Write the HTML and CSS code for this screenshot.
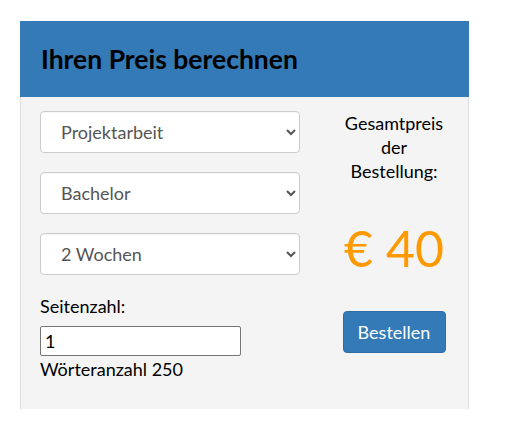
FILE: index.html
```html
<!DOCTYPE html>
<html lang="de">
<head>
<meta charset="utf-8">
<title>Ihren Preis berechnen</title>
<link rel="stylesheet" href="styles.css">
</head>
<body>
<div class="page">
  <section class="panel">
    <header class="panel-head">
      <h2 class="panel-title">Ihren Preis berechnen</h2>
    </header>
    <div class="panel-body">
      <div class="form-col">
        <select class="field">
          <option>Projektarbeit</option>
        </select>
        <select class="field">
          <option>Bachelor</option>
        </select>
        <select class="field">
          <option>2 Wochen</option>
        </select>
        <label class="pages-label" for="pages">Seitenzahl:</label>
        <input class="pages-input" id="pages" type="text" value="1">
        <div class="words">Wörteranzahl 250</div>
      </div>
      <div class="price-col">
        <div class="price-label">Gesamtpreis der Bestellung:</div>
        <div class="price">€ 40</div>
        <button class="order-btn" type="button">Bestellen</button>
      </div>
    </div>
  </section>
</div>
</body>
</html>
```
FILE: styles.css
```css
html, body {
  margin: 0;
  padding: 0;
  background: #fff;
}
body {
  font-family: Lato, "Open Sans", sans-serif;
  color: #000;
}
.page {
  padding: 21px 0 0 20px;
}
.panel {
  width: 449px;
  box-sizing: border-box;
  border: 1px solid #dcdcdc;
  border-bottom: none;
  background: #f4f4f4;
}
.panel-head {
  background: #337ab7;
  height: 76px;
  display: flex;
  align-items: center;
  margin: -1px -1px 0 -1px;
  padding: 0 20px 0 21px;
}
.panel-title {
  margin: 0;
  font-size: 26.5px;
  line-height: 32px;
  font-weight: 700;
  color: #000;
}
.panel-body {
  display: flex;
  padding: 14px 0 28px 19px;
}
.form-col {
  width: 260px;
  display: flex;
  flex-direction: column;
  align-items: flex-start;
}
.field {
  width: 260px;
  height: 42px;
  box-sizing: border-box;
  margin: 0 0 19px 0;
  padding: 0 10px 0 16px;
  border: 1px solid #ccc;
  border-radius: 4px;
  background-color: #fff;
  font-family: Lato, sans-serif;
  font-size: 18px;
  color: #555;
  box-shadow: inset 0 1px 1px rgba(0,0,0,0.04);
}
.pages-label {
  font-size: 18px;
  line-height: 24px;
  margin-bottom: 8px;
}
.pages-input {
  width: 201px;
  height: 30px;
  box-sizing: border-box;
  margin: 0 0 1px 0;
  padding: 0 4px;
  border: 1px solid #767676;
  border-radius: 2px;
  font-family: Lato, sans-serif;
  font-size: 18px;
  color: #000;
  background: #fff;
}
.words {
  font-size: 18px;
  line-height: 24px;
}
.price-col {
  flex: 1;
  display: flex;
  flex-direction: column;
  align-items: center;
  text-align: center;
  padding-left: 20px;
}
.price-label {
  width: 110px;
  font-size: 18px;
  line-height: 24px;
}
.price {
  margin-top: 35px;
  font-size: 50px;
  line-height: 60px;
  color: #ff9900;
}
.order-btn {
  margin-top: 33px;
  width: 103px;
  height: 42px;
  border: 1px solid #2e6da4;
  border-radius: 4px;
  background: #337ab7;
  color: #fff;
  font-family: Lato, sans-serif;
  font-size: 18px;
  padding: 0;
}
```
